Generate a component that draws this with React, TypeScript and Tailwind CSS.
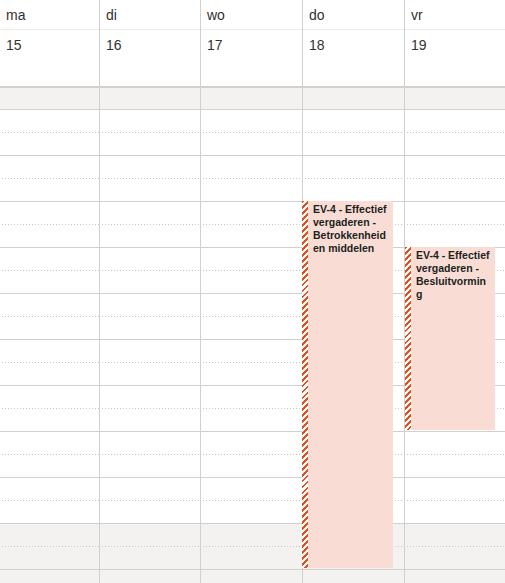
const days = [
  { name: "ma", date: 15, width: "w-[100px]" },
  { name: "di", date: 16, width: "w-[101px]" },
  { name: "wo", date: 17, width: "w-[102px]" },
  { name: "do", date: 18, width: "w-[102px]" },
  { name: "vr", date: 19, width: "flex-1" },
];

type CalEvent = {
  day: number;
  title: string;
  className: string;
};

// positions inside the slot area (rows are 46px each)
const events: CalEvent[] = [
  {
    day: 3,
    title: "EV-4 - Effectief vergaderen - Betrokkenheid en middelen",
    className: "left-[-1px] top-[91px] h-[367px] w-[91px]",
  },
  {
    day: 4,
    title: "EV-4 - Effectief vergaderen - Besluitvorming",
    className: "left-0 top-[137px] h-[183px] w-[90px]",
  },
];

const SLOT_COUNT = 11;
const WORK_SLOTS = 9;

function Slot({ off }: { off: boolean }) {
  return (
    <div
      className={`flex h-[46px] shrink-0 flex-col border-b border-[#d2d0ce] ${
        off ? "bg-[#f3f2f1]" : "bg-white"
      }`}
    >
      <div className="h-[22px]" />
      <div className="ml-[2px] h-px bg-[linear-gradient(to_right,#c8c6c4_1px,transparent_1px)] bg-[length:3px_1px]" />
      <div className="h-[22px]" />
    </div>
  );
}

function EventBlock({ ev }: { ev: CalEvent }) {
  return (
    <div className={`absolute flex bg-[#f9ddd4] ${ev.className}`}>
      <div className="w-[6px] shrink-0 bg-[repeating-linear-gradient(135deg,#e0501c_0px,#e0501c_2px,#ffffff_2px,#ffffff_4.2px)]" />
      <div className="min-w-0 flex-1 break-words pl-[5px] pr-[5px] pt-[2px] text-[10.5px] font-bold leading-[13px] text-[#201f1e]">
        {ev.title}
      </div>
    </div>
  );
}

export default function App() {
  return (
    <div className="flex h-[583px] w-[505px] overflow-hidden bg-white font-['Liberation_Sans',Arial,sans-serif] text-[#323130]">
      {days.map((d, i) => (
        <div
          key={d.name}
          className={`flex shrink-0 flex-col ${d.width} ${
            i < days.length - 1 ? "border-r border-[#d2d0ce]" : ""
          }`}
        >
          <div className="h-[30px] shrink-0 border-b border-[#edebe9] pl-[6px] pt-[5px] text-[14px] leading-[20px]">
            {d.name}
          </div>
          <div className="h-[56px] shrink-0 pl-[6px] pt-[5px] text-[14px] leading-[20px]">
            {d.date}
          </div>
          <div className="h-[2px] shrink-0 bg-[#d2d0ce]" />
          <div className="h-[22px] shrink-0 border-b border-[#d2d0ce] bg-[#f3f2f1]" />
          <div className="relative flex flex-col">
            {Array.from({ length: SLOT_COUNT }).map((_, s) => (
              <Slot key={s} off={s >= WORK_SLOTS} />
            ))}
            {events
              .filter((ev) => ev.day === i)
              .map((ev) => (
                <EventBlock key={ev.title} ev={ev} />
              ))}
          </div>
        </div>
      ))}
    </div>
  );
}
